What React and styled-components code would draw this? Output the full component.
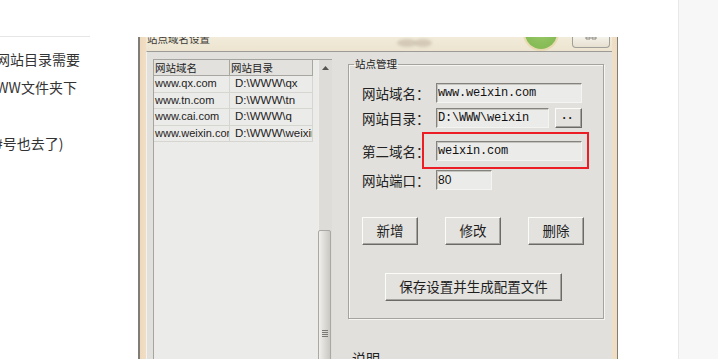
import React from 'react';
import styled, { createGlobalStyle } from 'styled-components';

const sites = [
  ['www.qx.com', 'D:\\WWW\\qx'],
  ['www.tn.com', 'D:\\WWW\\tn'],
  ['www.cai.com', 'D:\\WWW\\q'],
  ['www.weixin.com', 'D:\\WWW\\weixin'],
];

const cjk = '"Noto Sans CJK SC", "Noto Sans", sans-serif';

const GlobalStyle = createGlobalStyle`
  html, body {
    margin: 0;
    padding: 0;
    background: #fff;
  }
  body {
    width: 718px;
    height: 359px;
    overflow: hidden;
  }
`;

const Page = styled.div`
  display: flex;
  width: 718px;
  height: 359px;
  overflow: hidden;
  background: #fff;
`;

/* article text cut off on the left */
const Article = styled.div`
  width: 138px;
  flex-shrink: 0;
  overflow: hidden;
  padding-top: 36px;
  font-family: ${cjk};
  font-size: 14px;
  color: #333;
`;

const Rule = styled.div`
  width: 90px;
  height: 1px;
  background: #e6e6e6;
  margin-bottom: 8px;
`;

const Line = styled.div`
  height: 28px;
  line-height: 28px;
  white-space: nowrap;
  margin-left: ${(p) => p.$shift}px;
`;

/* the dialog screenshot */
const Window = styled.div`
  width: 480px;
  height: 322px;
  flex-shrink: 0;
  margin-top: 37px;
  box-sizing: border-box;
  display: flex;
  flex-direction: column;
  border-left: 2px solid #7e7d78;
  border-right: 1px solid #7e7d78;
  padding: 0 5px 0 6px;
  background: linear-gradient(90deg, #efd9bd, #f3e8d4 4%, #f1e7d3 96%, #efdcc2);
`;

const TitleBar = styled.div`
  position: relative;
  height: 14px;
  display: flex;
  align-items: flex-start;
  overflow: hidden;
  background: linear-gradient(180deg, #f2ebda, #ece4d0);
`;

const Title = styled.span`
  margin: -5px 0 0 1px;
  font-family: ${cjk};
  font-size: 10.5px;
  line-height: 14px;
  color: #3b3a36;
`;

const Orb = styled.span`
  position: absolute;
  left: 379px;
  top: -20px;
  width: 32px;
  height: 32px;
  border-radius: 50%;
  background: radial-gradient(circle at 50% 40%, #9ccb6c, #86bb55 70%);
  box-shadow: 0 0 0 2px rgba(232, 214, 168, 0.8);
`;

const Smudge = styled.span`
  position: absolute;
  left: ${(p) => p.$left}px;
  top: 2px;
  width: ${(p) => p.$w}px;
  height: 8px;
  border-radius: 50%;
  background: #cbbfac;
  filter: blur(1.5px);
  opacity: 0.75;
`;

const CloseButton = styled.span`
  margin-left: auto;
  margin-right: 2px;
  width: 38px;
  height: 11px;
  box-sizing: border-box;
  display: flex;
  justify-content: center;
  border: 1px solid #a19f99;
  border-top: none;
  border-radius: 0 0 4px 4px;
  background: linear-gradient(180deg, #f5f2ea, #e6e0d0);
`;

const Body = styled.div`
  flex: 1;
  min-height: 0;
  display: flex;
  align-items: flex-start;
  overflow: hidden;
  background: #e1e0dc;
  border-top: 1px solid #9c9b96;
  border-left: 1px solid #f3f2ef;
  padding: 7px 8px 0 6px;
`;

const ListBox = styled.div`
  width: 179px;
  height: 320px;
  flex-shrink: 0;
  box-sizing: border-box;
  display: flex;
  margin-right: 16px;
  border-top: 1px solid #a5a49f;
  border-left: 1px solid #a5a49f;
  background: #ebebe9;
`;

const ListArea = styled.div`
  flex: 1;
  padding-right: 5px;
`;

const HeadRow = styled.div`
  display: flex;
  height: 16px;
  background: #e2e1dd;
  border-bottom: 1px solid #a7a6a1;
  box-sizing: border-box;
`;

const HeadCell = styled.div`
  width: ${(p) => p.$w}px;
  box-sizing: border-box;
  padding-left: ${(p) => p.$pad}px;
  border-right: 1px solid #a7a6a1;
  font-family: ${cjk};
  font-size: 10.5px;
  line-height: 15px;
  color: #222;
`;

const Row = styled.div`
  display: flex;
  height: 16.5px;
  box-sizing: border-box;
  border-bottom: 1px solid #d6d5d0;
`;

const Cell = styled.div`
  width: ${(p) => p.$w}px;
  box-sizing: border-box;
  padding-left: ${(p) => p.$pad}px;
  border-right: 1px solid #d6d5d0;
  overflow: hidden;
  white-space: nowrap;
  font-family: "Liberation Sans", Arial, sans-serif;
  font-size: ${(p) => p.$size}px;
  line-height: 15.5px;
  color: #222;
`;

const Scrollbar = styled.div`
  width: 14px;
  display: flex;
  flex-direction: column;
  background: #dedcd8;
  border-left: 1px solid #eeede9;
  box-sizing: border-box;
`;

const ArrowUp = styled.div`
  height: 170px;
  display: flex;
  justify-content: center;
  padding-top: 6px;
  box-sizing: border-box;
`;

const Thumb = styled.div`
  flex: 1;
  width: 13px;
  margin-left: -1px;
  box-sizing: border-box;
  display: flex;
  justify-content: center;
  padding-top: 99px;
  border: 1px solid #a9a8a3;
  border-radius: 2px;
  background: linear-gradient(90deg, #f0efec, #dcdbd6 50%, #c9c8c3);
`;

const RightPane = styled.div`
  display: flex;
  flex-direction: column;
`;

const Group = styled.fieldset`
  width: 256px;
  box-sizing: border-box;
  margin: -1px 0 0;
  padding: 0;
  border: 1px solid #a4a39e;
  box-shadow: inset 1px 1px 0 #f6f5f2, 1px 1px 0 #f6f5f2;
`;

const Legend = styled.legend`
  margin-left: 5px;
  padding: 0 1px;
  font-family: ${cjk};
  font-size: 10.5px;
  line-height: 12px;
  color: #222;
`;

const GroupBody = styled.div`
  padding: 13px 0 17px 13px;
`;

const FieldRow = styled.div`
  position: relative;
  display: flex;
  align-items: center;
  height: 20px;
  margin-top: ${(p) => p.$gap}px;
`;

const Label = styled.span`
  width: 74px;
  font-family: ${cjk};
  font-size: 13.5px;
  color: #222;
  white-space: nowrap;
`;

const TextBox = styled.input`
  width: ${(p) => p.$w}px;
  height: 20px;
  box-sizing: border-box;
  margin: 0;
  padding: 0 0 0 1px;
  border: 1px solid;
  border-color: #84837e #f4f4f2 #f4f4f2 #84837e;
  box-shadow: inset 1px 1px 0 #c4c3be;
  background: #ebebe9;
  outline: none;
  color: #111;
  font-family: ${(p) => (p.$sans ? '"Liberation Sans", Arial, sans-serif' : '"Liberation Mono", monospace')};
  font-size: 12px;
  letter-spacing: ${(p) => (p.$sans ? 0 : -0.2)}px;
`;

const Bevel = styled.button`
  width: ${(p) => p.$w}px;
  height: ${(p) => p.$h}px;
  margin: 0 0 0 ${(p) => p.$ml || 0}px;
  padding: 0;
  box-sizing: border-box;
  background: #e3e2de;
  border: 1px solid;
  border-color: #fbfbfa #6b6a66 #6b6a66 #fbfbfa;
  box-shadow: inset -1px -1px 0 #a5a49f;
  font-family: ${cjk};
  font-size: 13.5px;
  line-height: 1;
  color: #1e1e1e;
  white-space: nowrap;
`;

const Dots = styled.span`
  font-family: "Liberation Sans", Arial, sans-serif;
  font-size: 12px;
  font-weight: bold;
  letter-spacing: 2px;
  position: relative;
  top: -1px;
`;

const RedFrame = styled.span`
  position: absolute;
  left: 60px;
  top: -9px;
  width: 167px;
  height: 37px;
  box-sizing: border-box;
  border: 2px solid #ec1d24;
  pointer-events: none;
`;

const ButtonRow = styled.div`
  display: flex;
  gap: 27px;
  margin-top: 27px;
`;

const SaveRow = styled.div`
  display: flex;
  margin-top: 28px;
  padding-left: 23px;
`;

const NoteTitle = styled.div`
  margin: 29px 0 0 4px;
  font-family: ${cjk};
  font-size: 14px;
  line-height: 20px;
  color: #222;
`;

const SideStrip = styled.div`
  width: 39px;
  margin-left: auto;
  flex-shrink: 0;
  background: #f7f7f7;
  border-left: 1px solid #e8e8e8;
`;

export default function App() {
  return (
    <>
      <GlobalStyle />
      <Page>
        <Article>
          <Rule />
          <Line $shift={-4}>网站目录需要</Line>
          <Line $shift={-16}>WWW文件夹下</Line>
          <Line $shift={0}>&nbsp;</Line>
          <Line $shift={-5}>#号也去了)</Line>
        </Article>

        <Window>
          <TitleBar>
            <Title>站点域名设置</Title>
            <Smudge $left={251} $w={20} />
            <Smudge $left={268} $w={18} />
            <Orb />
            <CloseButton>
              <svg width="12" height="3" viewBox="0 0 12 3">
                <path d="M1 0 H5 V2 H1 Z M7 0 H11 V2 H7 Z" fill="none" stroke="#8a8882" strokeWidth="1" />
              </svg>
            </CloseButton>
          </TitleBar>

          <Body>
            <ListBox>
              <ListArea>
                <HeadRow>
                  <HeadCell $w={76} $pad={1}>网站域名</HeadCell>
                  <HeadCell $w={83} $pad={1}>网站目录</HeadCell>
                </HeadRow>
                {sites.map(([domain, dir]) => (
                  <Row key={domain}>
                    <Cell $w={76} $pad={1} $size={11}>{domain}</Cell>
                    <Cell $w={83} $pad={5} $size={11.5}>{dir}</Cell>
                  </Row>
                ))}
              </ListArea>
              <Scrollbar>
                <ArrowUp>
                  <svg width="7" height="4" viewBox="0 0 7 4">
                    <path d="M0 4 L3.5 0 L7 4 Z" fill="#55544f" />
                  </svg>
                </ArrowUp>
                <Thumb>
                  <svg width="6" height="7" viewBox="0 0 6 7">
                    <path d="M0 0.5 H6 M0 2.5 H6 M0 4.5 H6 M0 6.5 H6" stroke="#7a7974" strokeWidth="1" />
                  </svg>
                </Thumb>
              </Scrollbar>
            </ListBox>

            <RightPane>
              <Group>
                <Legend>站点管理</Legend>
                <GroupBody>
                  <FieldRow $gap={0}>
                    <Label>网站域名：</Label>
                    <TextBox $w={146} readOnly value="www.weixin.com" />
                  </FieldRow>
                  <FieldRow $gap={5}>
                    <Label>网站目录：</Label>
                    <TextBox $w={113} readOnly value="D:\WWW\weixin" />
                    <Bevel $w={27} $h={20} $ml={6}>
                      <Dots>··</Dots>
                    </Bevel>
                  </FieldRow>
                  <FieldRow $gap={13}>
                    <Label>第二域名：</Label>
                    <TextBox $w={146} readOnly value="weixin.com" />
                    <RedFrame />
                  </FieldRow>
                  <FieldRow $gap={9}>
                    <Label>网站端口：</Label>
                    <TextBox $w={56} $sans readOnly value="80" />
                  </FieldRow>
                  <ButtonRow>
                    <Bevel $w={56} $h={28}>新增</Bevel>
                    <Bevel $w={56} $h={28}>修改</Bevel>
                    <Bevel $w={56} $h={28}>删除</Bevel>
                  </ButtonRow>
                  <SaveRow>
                    <Bevel $w={177} $h={28}>保存设置并生成配置文件</Bevel>
                  </SaveRow>
                </GroupBody>
              </Group>
              <NoteTitle>说明</NoteTitle>
            </RightPane>
          </Body>
        </Window>

        <SideStrip />
      </Page>
    </>
  );
}
